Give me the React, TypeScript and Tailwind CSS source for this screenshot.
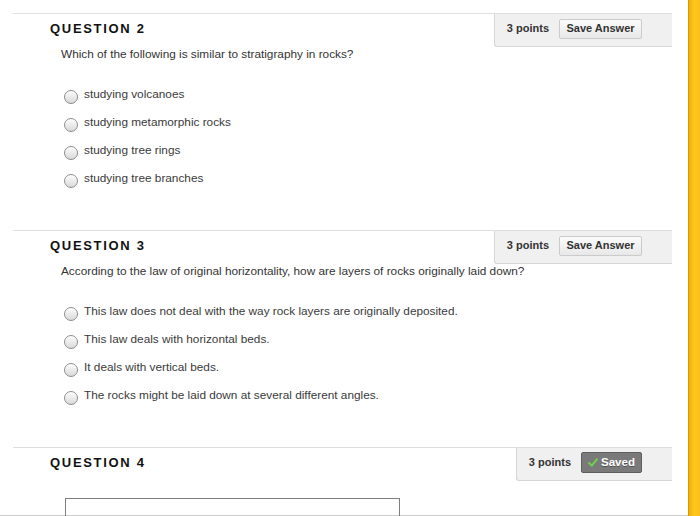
import React from "react";

type Question = {
  number: number;
  prompt: string;
  options: string[];
};

const questions: Question[] = [
  {
    number: 2,
    prompt: "Which of the following is similar to stratigraphy in rocks?",
    options: [
      "studying volcanoes",
      "studying metamorphic rocks",
      "studying tree rings",
      "studying tree branches",
    ],
  },
  {
    number: 3,
    prompt:
      "According to the law of original horizontality, how are layers of rocks originally laid down?",
    options: [
      "This law does not deal with the way rock layers are originally deposited.",
      "This law deals with horizontal beds.",
      "It deals with vertical beds.",
      "The rocks might be laid down at several different angles.",
    ],
  },
];

function Radio() {
  return (
    <span className="mt-[3px] h-[14px] w-[14px] shrink-0 rounded-full border border-[#8d8d8d] bg-gradient-to-b from-[#fdfdfd] to-[#d9d9d9] shadow-[inset_0_1px_1px_rgba(255,255,255,0.9)]" />
  );
}

function PointsBox({ saved }: { saved?: boolean }) {
  return (
    <div className="flex h-[33px] items-center gap-[10px] rounded-bl-[3px] border-b border-l border-[#d6d6d6] bg-[#f0f0f0] pb-[3px] pl-[12px] pr-[30px]">
      <span className="text-[11px] font-bold text-[#333]">3 points</span>
      {saved ? (
        <button
          type="button"
          className="flex h-[21px] w-[61px] items-center justify-center gap-[3px] rounded-[2px] border border-[#5e5e5e] bg-[#7a7a7a] text-[11.5px] font-bold text-white [text-shadow:0_1px_0_rgba(0,0,0,0.35)]"
        >
          <svg width="10" height="9" viewBox="0 0 10 9">
            <path d="M1 5 L3.8 7.6 L9 1.2" fill="none" stroke="#6fd04a" strokeWidth="2" strokeLinecap="round" strokeLinejoin="round" />
          </svg>
          Saved
        </button>
      ) : (
        <button
          type="button"
          className="flex h-[20px] w-[83px] items-center justify-center rounded-[2px] border border-[#cbcbcb] bg-gradient-to-b from-[#fbfbfb] to-[#e8e8e8] text-[11px] font-bold text-[#333]"
        >
          Save Answer
        </button>
      )}
    </div>
  );
}

function Header({ number, saved }: { number: number; saved?: boolean }) {
  return (
    <div className="flex items-center justify-between">
      <h2 className="mb-[3px] pl-[37px] text-[13px] font-bold tracking-[0.13em] text-[#111]">
        QUESTION {number}
      </h2>
      <PointsBox saved={saved} />
    </div>
  );
}

function QuestionBlock({ q }: { q: Question }) {
  return (
    <section className="border-t border-[#dedede] pb-[37px]">
      <Header number={q.number} />
      <p className="pl-[48px] text-[11.8px] leading-[14px] text-[#333]">{q.prompt}</p>
      <ul className="mt-[20px] pl-[51px]">
        {q.options.map((opt) => (
          <li key={opt} className="flex h-[28px] items-center gap-[6px]">
            <Radio />
            <span className="text-[11.8px] text-[#3a3a3a]">{opt}</span>
          </li>
        ))}
      </ul>
    </section>
  );
}

export default function App() {
  return (
    <div className="flex h-[516px] w-[700px] overflow-hidden bg-white font-['Liberation_Sans',Arial,sans-serif]">
      <div className="flex flex-1 flex-col border-b border-[#cfcfcf]">
        <div className="ml-[13px] mr-[16px] mt-[13px]">
          {questions.map((q) => (
            <QuestionBlock key={q.number} q={q} />
          ))}
          <section className="border-t border-[#dedede]">
            <Header number={4} saved />
            <div className="ml-[52px] mt-[17px] h-[40px] w-[335px] border border-[#7d7d7d]" />
          </section>
        </div>
      </div>
      <div className="w-[12px] border-l border-[#d49a00] bg-gradient-to-r from-[#f3b000] via-[#ffc81f] to-[#fbbf14]" />
    </div>
  );
}
